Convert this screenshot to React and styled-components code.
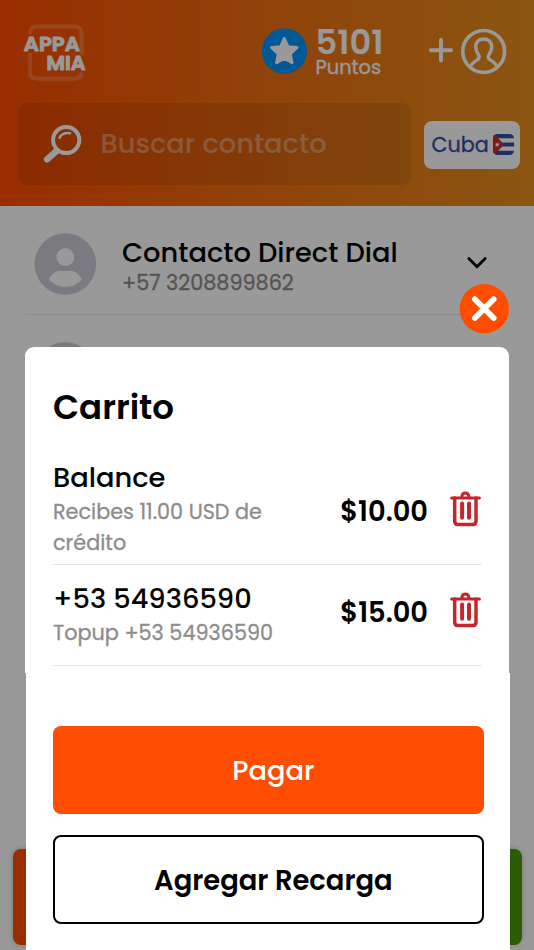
import React from 'react';
import styled, { createGlobalStyle } from 'styled-components';

const GlobalStyle = createGlobalStyle`
  * {
    box-sizing: border-box;
  }

  body {
    margin: 0;
    font-family: Poppins, Inter, 'Open Sans', sans-serif;
    overflow: hidden;
  }

  svg {
    display: block;
    flex-shrink: 0;
  }
`;

const Screen = styled.div`
  position: relative;
  display: flex;
  flex-direction: column;
  width: 534px;
  height: 950px;
  overflow: hidden;
  background-color: #fff;
`;

const Text = styled.div`
  color: ${(props) => props.$color || '#000'};
  font-size: ${(props) => props.$size}px;
  font-weight: ${(props) => props.$weight || 500};
  line-height: ${(props) => props.$line}px;
  white-space: nowrap;
`;

const SmallText = styled(Text)`
  font-weight: 400;
  -webkit-text-stroke: 0.3px currentColor;
`;

const Header = styled.header`
  height: 205.6px;
  padding: 23px 14px 0 18px;
  background: linear-gradient(90deg, #ff4d00, #f06e10 48%, #e88f1e);
`;

const TopBar = styled.div`
  display: flex;
  align-items: flex-start;
  height: 80px;
  padding-left: 4px;
`;

const Points = styled.div`
  display: flex;
  gap: 8.5px;
  margin-left: 173px;
  padding-top: 5px;
  width: 167px;
`;

const PointsText = styled.div`
  display: flex;
  flex-direction: column;
`;

const Profile = styled.div`
  padding-top: 5px;
`;

const SearchRow = styled.div`
  display: flex;
  align-items: center;
  justify-content: space-between;
`;

const SearchBox = styled.div`
  display: flex;
  align-items: center;
  gap: 18.5px;
  width: 393px;
  height: 82px;
  padding-left: 25px;
  border-radius: 9px;
  background-color: rgba(0, 0, 0, 0.085);
`;

const Country = styled.div`
  display: flex;
  align-items: center;
  justify-content: space-between;
  width: 96px;
  height: 48px;
  margin-top: 1px;
  padding: 0 6px 0 7.5px;
  border-radius: 8px;
  background-color: #fff;
`;

const Contact = styled.div`
  display: flex;
  height: 109px;
  margin: 0 25px;
  padding: 27px 21px 0 9px;
  border-bottom: 1px solid #e9e9ee;
`;

const ContactInfo = styled.div`
  flex: 1;
  padding: 3px 0 0 26px;
`;

const Chevron = styled.div`
  padding-top: 22.5px;
`;

const BottomBar = styled.div`
  display: flex;
  justify-content: space-between;
  margin: auto 12px 5px 13px;
`;

const BarButton = styled.div`
  width: 246px;
  height: 96px;
  border-radius: 8px;
  background-color: ${(props) => props.$color};
  box-shadow: 0 0 6px rgba(0, 0, 0, 0.2);
`;

const Overlay = styled.div`
  position: absolute;
  inset: 0;
  display: flex;
  flex-direction: column;
  padding: 284px 25px 0;
  background-color: rgba(0, 0, 0, 0.4);
`;

const CloseButton = styled.div`
  align-self: flex-end;
  height: 63px;
`;

const CartBody = styled.section`
  height: 326px;
  padding: 33px 27px 0 28px;
  border-radius: 9px 9px 0 0;
  background-color: #fff;
`;

const CartTitle = styled.div`
  height: 80.7px;
`;

const CartItem = styled.div`
  display: flex;
  align-items: center;
  height: ${(props) => props.$height}px;
  border-bottom: 1px solid #e6e6eb;
`;

const ItemInfo = styled.div`
  flex: 1;
  margin-top: ${(props) => props.$shift}px;
`;

const ItemSide = styled.div`
  display: flex;
  align-items: center;
  gap: 22px;
  margin-top: ${(props) => props.$shift}px;
  padding-right: 1px;
`;

const TrashButton = styled.div`
  margin-top: -5.5px;
`;

const CartActions = styled.div`
  display: flex;
  flex: 1;
  flex-direction: column;
  gap: 21px;
  margin-right: -0.7px;
  margin-left: 0.7px;
  padding: 52.5px 26px 0 27.3px;
  background-color: #fff;
`;

const ActionButton = styled.div`
  display: flex;
  align-items: center;
  justify-content: center;
  height: 88.5px;
  padding: ${(props) => (props.$outlined ? 4 : 2)}px 0 0 10px;
  border: ${(props) => (props.$outlined ? '2px solid #000' : 'none')};
  border-radius: 8px;
  background-color: ${(props) => (props.$outlined ? '#fff' : '#ff4d00')};
`;

const Logo = () => (
  <svg width='66' height='60' viewBox='22 22 66 60'>
    <g fill='none' stroke='#fff' strokeOpacity='0.2' strokeWidth='4'>
      <path d='M30 33V32Q30 25.4 37 25.4H74.5Q81.5 25.4 81.5 32V48L82.8 54' />
      <path d='M30 52V70.5Q30 77.7 37 77.7H74.5Q80.5 77.7 81.8 71.5' />
    </g>
    <g
      fill='#fff'
      stroke='#fff'
      strokeWidth='1'
      strokeLinejoin='round'
      fontFamily='Poppins, Inter, sans-serif'
      fontWeight='600'
      fontSize='20'
    >
      <text x='23.8' y='50.3' textLength='56' lengthAdjust='spacingAndGlyphs'>APPA</text>
      <text x='46.5' y='69' textLength='39' lengthAdjust='spacingAndGlyphs'>MIA</text>
    </g>
  </svg>
);

const StarBadge = () => (
  <svg width='46' height='46' viewBox='-23 -23 46 46'>
    <circle cx='0.3' r='22.7' fill='#0093f7' />
    <path
      d='M0.3 -12.6L4.1 -4.4L13.1 -3.5L6.4 2.9L8.1 11.8L0.3 7.5L-7.5 11.8L-5.8 2.9L-12.5 -3.5L-3.5 -4.4Z'
      fill='#fff'
      stroke='#fff'
      strokeWidth='2.8'
      strokeLinejoin='round'
    />
  </svg>
);

const ProfileIcon = () => (
  <svg
    width='79'
    height='46'
    viewBox='428 28.5 79 46'
    fill='none'
    stroke='#fff'
    strokeWidth='3.6'
    strokeLinecap='round'
  >
    <path d='M430.9 50.8H451.1M441 40.6V61' strokeWidth='4' />
    <g transform='translate(483.7 51.9)'>
      <circle r='20.9' />
      <path
        d='M-13.6 15.2C-11 10.8 -8.4 9.6 -6.2 8.2C-4.2 7 -4.2 5 -5.4 3C-7.2 0.5 -8 -2 -8 -4.7C-8 -9.6 -4.6 -12.4 0 -12.4C4.6 -12.4 8 -9.6 8 -4.7C8 -2 7.2 0.5 5.4 3C4.2 5 4.2 7 6.2 8.2C8.4 9.6 11 10.8 13.6 15.2'
        strokeWidth='3.4'
      />
    </g>
  </svg>
);

const SearchIcon = () => (
  <svg width='39' height='40' viewBox='43 124 39 40' fill='none' stroke='#fff' strokeLinecap='round'>
    <circle cx='66.2' cy='140' r='13.1' strokeWidth='4' />
    <path d='M56.5 151L47 159.3' strokeWidth='6.4' />
    <path d='M59.6 137.8Q62.4 131.9 70.2 133.2' strokeWidth='2.4' />
  </svg>
);

const CubaFlag = () => (
  <svg width='21' height='21' viewBox='0 0 21 21'>
    <clipPath id='flag'>
      <rect width='21' height='21' rx='4.5' />
    </clipPath>
    <g clipPath='url(#flag)'>
      <rect width='21' height='21' fill='#344ea8' />
      <path d='M0 4.2H21V8.4H0ZM0 12.6H21V16.8H0Z' fill='#fff' />
      <path d='M0 0L1.5 0L11 10.5L1.5 21H0Z' fill='#d02a2c' />
      <path
        d='M4.2 8L4.9 9.8H6.8L5.3 11L5.9 12.8L4.2 11.7L2.5 12.8L3.1 11L1.6 9.8H3.5Z'
        fill='#fff'
      />
    </g>
  </svg>
);

const Avatar = () => (
  <svg width='62' height='62' viewBox='-31 -31 62 62'>
    <circle cx='0.3' r='30.8' fill='#cbccd6' />
    <circle cx='0.3' cy='-7' r='9' fill='#fff' />
    <path
      d='M-16.1 15.3C-13.2 9.6 -9.7 7 -4.7 7H5.3C10.3 7 13.8 9.6 16.7 15.3C12.3 20.7 6.3 23 0.3 23C-5.7 23 -11.7 20.7 -16.1 15.3Z'
      fill='#fff'
    />
  </svg>
);

const TrashIcon = () => (
  <svg width='31' height='36' viewBox='0 0 31 36' fill='none' stroke='#c3272d' strokeLinecap='round'>
    <path d='M1.6 7H29.4' strokeWidth='3' />
    <path d='M11.9 6.5V5.5Q12.2 1.9 15.4 1.9Q18.6 1.9 18.9 5.5V6.5' strokeWidth='3' />
    <path d='M4.7 7V30.2Q4.7 33.4 7.9 33.4H22.8Q26 33.4 26 30.2V7' strokeWidth='3.5' />
    <path d='M12.1 12.6V26.8M19 12.6V26.8' strokeWidth='4' />
  </svg>
);

const items = [
  {
    name: 'Balance',
    detail: ['Recibes 11.00 USD de', 'crédito'],
    price: '$10.00',
    height: 104.3,
    infoShift: -5,
    sideShift: -1,
  },
  {
    name: '+53 54936590',
    detail: ['Topup +53 54936590'],
    price: '$15.00',
    height: 101.2,
    infoShift: 0.6,
    sideShift: -5,
  },
];

const App = () => (
  <>
    <GlobalStyle />
    <Screen>
      <Header>
        <TopBar>
          <Logo />
          <Points>
            <StarBadge />
            <PointsText>
              <Text $size='33.7' $weight='600' $line='29' $color='#fff'>
                5101
              </Text>
              <SmallText $size='19.4' $line='21' $color='#fff'>
                Puntos
              </SmallText>
            </PointsText>
          </Points>
          <Profile>
            <ProfileIcon />
          </Profile>
        </TopBar>
        <SearchRow>
          <SearchBox>
            <SearchIcon />
            <Text $size='27.3' $line='40' $color='rgba(255, 255, 255, 0.36)'>
              Buscar contacto
            </Text>
          </SearchBox>
          <Country>
            <SmallText $size='20.7' $line='28' $color='#344ea8'>
              Cuba
            </SmallText>
            <CubaFlag />
          </Country>
        </SearchRow>
      </Header>
      <Contact>
        <Avatar />
        <ContactInfo>
          <Text $size='27.3' $line='33.5'>
            Contacto Direct Dial
          </Text>
          <SmallText $size='20.75' $line='27' $color='#8c8c8c'>
            +57 3208899862
          </SmallText>
        </ContactInfo>
        <Chevron>
          <svg width='22' height='16' viewBox='0 0 22 16' fill='none' stroke='#000' strokeWidth='2.8'>
            <path d='M2.8 3.4L11 11.8L19.2 3.4' strokeLinecap='round' />
          </svg>
        </Chevron>
      </Contact>
      <Contact>
        <Avatar />
      </Contact>
      <BottomBar>
        <BarButton $color='#ff4d00' />
        <BarButton $color='#469900' />
      </BottomBar>
      <Overlay>
        <CloseButton>
          <svg width='50' height='50' viewBox='0 0 50 50'>
            <circle cx='25.3' cy='24.8' r='24.7' fill='#ff4d00' />
            <path
              d='M15.9 15.2L34.7 34M34.7 15.2L15.9 34'
              stroke='#fff'
              strokeWidth='5.8'
              strokeLinecap='round'
            />
          </svg>
        </CloseButton>
        <CartBody>
          <CartTitle>
            <Text $size='34' $weight='600' $line='55'>
              Carrito
            </Text>
          </CartTitle>
          {items.map((item) => (
            <CartItem key={item.name} $height={item.height}>
              <ItemInfo $shift={item.infoShift}>
                <Text $size='27.3' $line='34.5'>
                  {item.name}
                </Text>
                {item.detail.map((line) => (
                  <SmallText key={line} $size='20.75' $line='31.5' $color='#8c8c8c'>
                    {line}
                  </SmallText>
                ))}
              </ItemInfo>
              <ItemSide $shift={item.sideShift}>
                <Text $size='27.3' $weight='600' $line='34'>
                  {item.price}
                </Text>
                <TrashButton>
                  <TrashIcon />
                </TrashButton>
              </ItemSide>
            </CartItem>
          ))}
        </CartBody>
        <CartActions>
          <ActionButton>
            <Text $size='27.3' $line='34' $color='#fff'>
              Pagar
            </Text>
          </ActionButton>
          <ActionButton $outlined>
            <Text $size='27.4' $weight='600' $line='34'>
              Agregar Recarga
            </Text>
          </ActionButton>
        </CartActions>
      </Overlay>
    </Screen>
  </>
);

export default App;
